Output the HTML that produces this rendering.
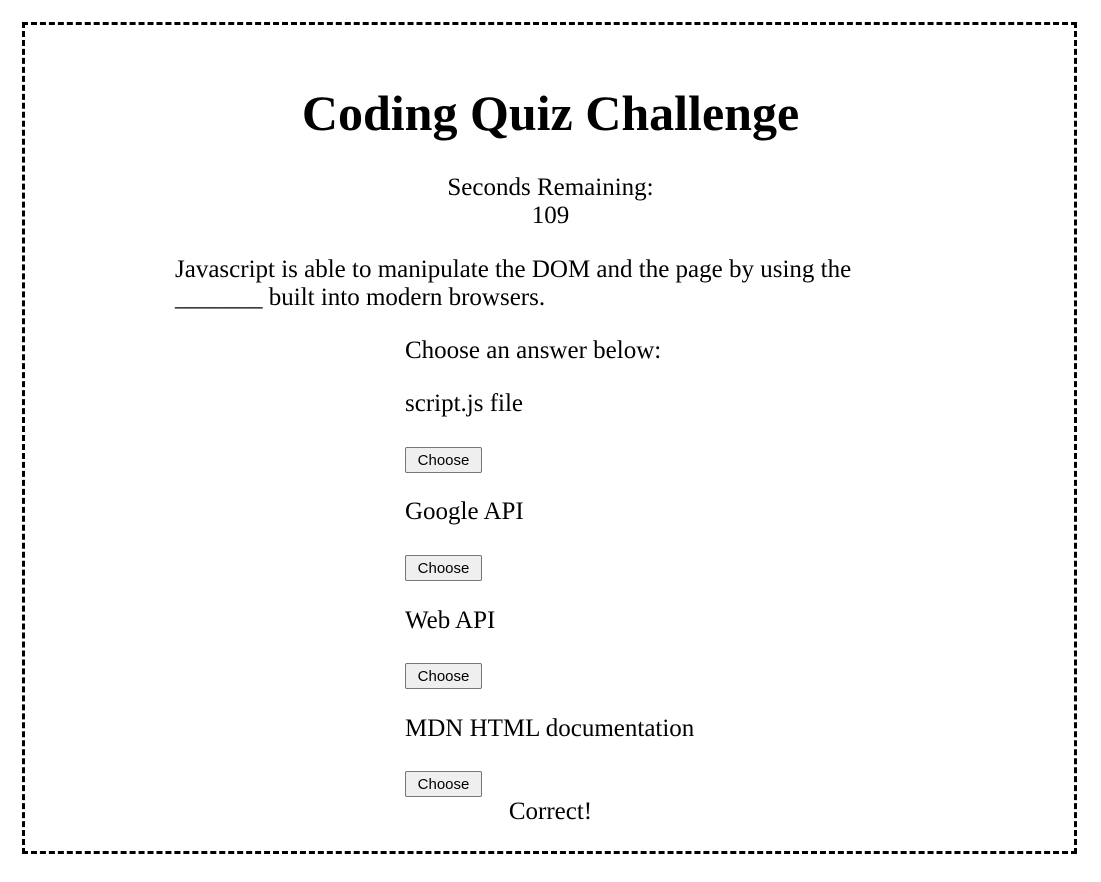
<!DOCTYPE html>
<html><head><style>
html,body{margin:0;padding:0;background:#fff;width:1101px;height:882px;overflow:hidden;font-family:"Liberation Serif",serif;color:#000}
.box{position:absolute;left:22px;top:22px;width:1049px;height:826px;border:3px dashed #000}
.t{position:absolute;font-size:25px;line-height:28px;white-space:nowrap}
.c{left:0;width:1101px;text-align:center}
h1{position:absolute;left:0;width:1101px;top:85px;margin:0;text-align:center;font-size:50px;line-height:56px;font-weight:bold}
button{position:absolute;left:405px;width:77px;height:26px;font-family:"Liberation Sans",sans-serif;font-size:15px;background:#efefef;border:1px solid #767676;border-radius:2px;padding:0;color:#000}
</style></head><body>
<div class="box"></div>
<h1>Coding Quiz Challenge</h1>
<div class="t c" style="top:174px">Seconds Remaining:</div>
<div class="t c" style="top:202px">109</div>
<div class="t" style="left:175px;top:256px">Javascript is able to manipulate the DOM and the page by using the</div>
<div class="t" style="left:175px;top:284px">_______ built into modern browsers.</div>
<div class="t" style="left:405px;top:337px">Choose an answer below:</div>
<div class="t" style="left:405px;top:390px">script.js file</div>
<button style="top:447px">Choose</button>
<div class="t" style="left:405px;top:498px">Google API</div>
<button style="top:555px">Choose</button>
<div class="t" style="left:405px;top:607px">Web API</div>
<button style="top:663px">Choose</button>
<div class="t" style="left:405px;top:715px">MDN HTML documentation</div>
<button style="top:771px">Choose</button>
<div class="t c" style="top:798px">Correct!</div>
</body></html>
